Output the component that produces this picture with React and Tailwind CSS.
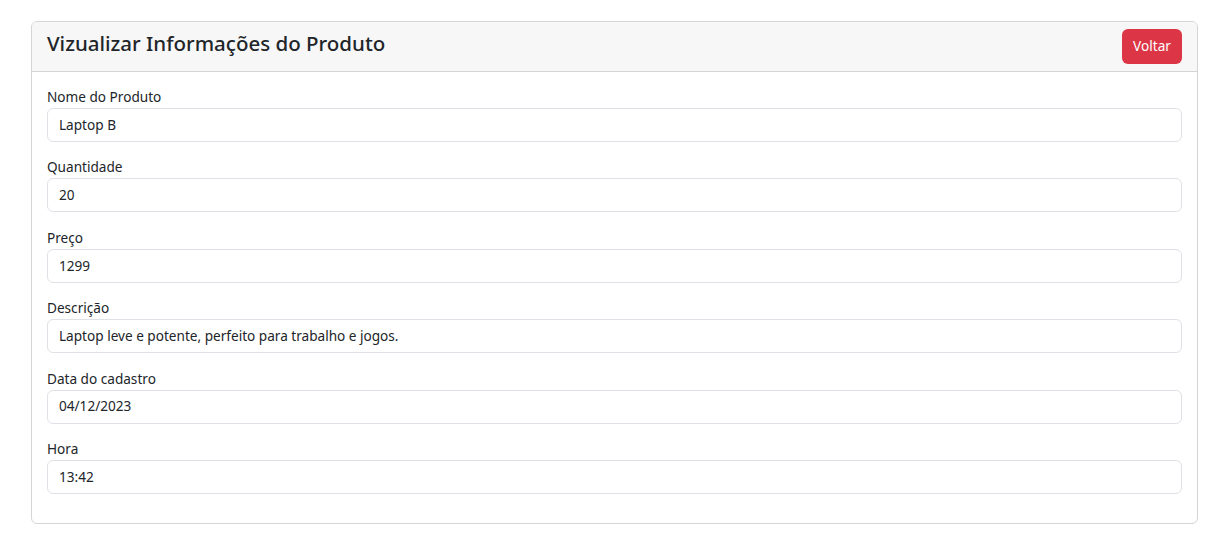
import React from "react";

const fields = [
  { label: "Nome do Produto", value: "Laptop B" },
  { label: "Quantidade", value: "20" },
  { label: "Preço", value: "1299" },
  { label: "Descrição", value: "Laptop leve e potente, perfeito para trabalho e jogos." },
  { label: "Data do cadastro", value: "04/12/2023" },
  { label: "Hora", value: "13:42" },
];

export default function App() {
  return (
    <div
      className="min-h-screen bg-white text-[#212529]"
      style={{ fontFamily: '"Noto Sans", "Open Sans", sans-serif' }}
    >
      <div className="ml-[31px] mt-[21px] w-[1167px] border border-[#d5d5d5] rounded-[6px] overflow-hidden">
        <div className="h-[50px] bg-[#f7f7f7] border-b border-[#d5d5d5] flex items-start justify-between pl-[15px] pr-[15px]">
          <h1 className="text-[20.5px] font-medium leading-[24px] mt-[9px]">
            Vizualizar Informações do Produto
          </h1>
          <button className="mt-[7px] h-[35px] w-[60px] bg-[#dc3545] text-white text-[13.6px] rounded-[6px]">
            Voltar
          </button>
        </div>
        <div className="px-[15px] pt-[15px] pb-[14px]">
          {fields.map((f) => (
            <div key={f.label} className="mb-[15.4px]">
              <label className="block text-[13.6px] leading-[19px] mb-[2px]">{f.label}</label>
              <div className="h-[34px] border border-[#dee2e6] rounded-[6px] px-[11px] flex items-center text-[13.6px]">
                {f.value}
              </div>
            </div>
          ))}
        </div>
      </div>
    </div>
  );
}
